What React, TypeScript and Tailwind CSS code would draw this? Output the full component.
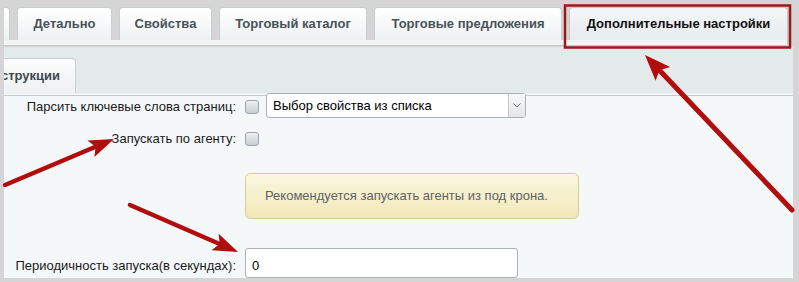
import React from "react";

function Arrow({ x1, y1, x2, y2, L = 24, W = 18, sw = 4.5 }: { x1: number; y1: number; x2: number; y2: number; L?: number; W?: number; sw?: number }) {
  const dx = x2 - x1;
  const dy = y2 - y1;
  const len = Math.hypot(dx, dy);
  const ux = dx / len;
  const uy = dy / len;
  const nx = -uy;
  const ny = ux;
  const bx = x2 - ux * L;
  const by = y2 - uy * L;
  const nbx = x2 - ux * (L - 5);
  const nby = y2 - uy * (L - 5);
  const pts = [
    [x2, y2],
    [bx + (nx * W) / 2, by + (ny * W) / 2],
    [nbx, nby],
    [bx - (nx * W) / 2, by - (ny * W) / 2],
  ]
    .map((p) => p.join(","))
    .join(" ");
  return (
    <g>
      <line x1={x1} y1={y1} x2={nbx} y2={nby} stroke="#b10d0d" strokeWidth={sw} strokeLinecap="round" />
      <polygon points={pts} fill="#b10d0d" />
    </g>
  );
}

function Tab({ label, w }: { label: string; w: number }) {
  return (
    <div
      className="h-[33px] shrink-0 flex items-center justify-center rounded-t-[4px] border border-b-0 border-[#c9cfd1] bg-gradient-to-b from-[#ffffff] to-[#eef1f2] text-[13px] font-bold text-[#48525a]"
      style={{ width: w }}
    >
      {label}
    </div>
  );
}

function Checkbox() {
  return <div className="w-[14px] h-[14px] rounded-[3px] border border-[#9ea6ab] bg-gradient-to-b from-[#eef0f2] to-[#c8ced2] shrink-0" />;
}

export default function App() {
  return (
    <div className="relative w-[799px] h-[282px] overflow-hidden bg-[#d5d5d5]" style={{ fontFamily: '"Liberation Sans", Arial, sans-serif' }}>
      {/* Tab bar */}
      <div className="h-[47px] flex flex-col">
        <div className="h-[7px]" />
        <div className="h-[33px] flex items-end pl-[4px] gap-[7px]">
          <div className="w-[6px] h-[33px] shrink-0 rounded-tr-[4px] border border-l-0 border-b-0 border-[#c9cfd1] bg-gradient-to-b from-[#ffffff] to-[#eef1f2]" />
          <Tab label="Детально" w={95} />
          <Tab label="Свойства" w={93} />
          <Tab label="Торговый каталог" w={148} />
          <Tab label="Торговые предложения" w={188} />
          <div className="w-[219px] h-[39px] -mb-[6px] shrink-0 flex items-start justify-center pt-[6px] rounded-t-[4px] border border-b-0 border-[#c4cacc] bg-gradient-to-b from-[#f4f6f6] to-[#e5eaeb] text-[13px] font-bold text-[#111]">
            Дополнительные настройки
          </div>
        </div>
        <div className="h-[6px] ml-[4px] mr-[12px] bg-[#f2f4f4] border-b border-[#c3c9cb]" />
      </div>
      {/* Sub tab area */}
      <div className="ml-[4px] mr-[6px] h-[46px] bg-[#e4e9ea] flex items-end">
        <div className="w-[72px] h-[35px] rounded-tr-[4px] border border-l-0 border-b-0 border-[#c9cfd1] bg-gradient-to-b from-[#fbfcfc] to-[#eef1f2] flex items-center text-[13px] font-bold text-[#3f484e] overflow-hidden">
          <span className="-ml-[3px]">струкции</span>
        </div>
      </div>
      <div className="ml-[4px] mr-[6px] h-[3px] bg-[#f3f5f5] border-b border-[#c5cbcd]" />
      {/* Content */}
      <div className="ml-[4px] mr-[6px] h-[182px] bg-[#f5f8f9] flex flex-col text-[13px] text-[#1a1a1a]">
        <div className="h-[22px] flex items-center">
          <div className="w-[233px] text-right pr-[1px]">Парсить ключевые слова страниц:</div>
          <div className="ml-[8px]"><Checkbox /></div>
          <div className="ml-[7px] w-[260px] h-[25px] -mt-[3px] rounded-[3px] border border-[#a9b1b5] bg-white flex items-center justify-between">
            <span className="pl-[6px] text-black">Выбор свойства из списка</span>
            <div className="w-[17px] h-full border-l border-[#c2c8cb] bg-gradient-to-b from-[#f7f7f7] to-[#e3e6e7] flex items-center justify-center">
              <svg width="8" height="5" viewBox="0 0 8 5"><path d="M0.5 0.5 L4 4 L7.5 0.5" stroke="#6d7579" strokeWidth="1" fill="none" /></svg>
            </div>
          </div>
        </div>
        <div className="h-[22px] mt-[11px] flex items-center">
          <div className="w-[233px] text-right pr-[1px]">Запускать по агенту:</div>
          <div className="ml-[8px]"><Checkbox /></div>
        </div>
        <div className="mt-[24px] ml-[241px] w-[334px] h-[49px] rounded-[5px] border border-[#d8cd97] bg-gradient-to-b from-[#fbf7e0] to-[#f1e8b8] flex items-center pl-[19px] text-[#5e6266]">
          Рекомендуется запускать агенты из под крона.
        </div>
        <div className="h-[30px] mt-[29px] flex items-start">
          <div className="w-[233px] text-right pr-[1px] mt-[8px]">Периодичность запуска(в секундах):</div>
          <div className="ml-[8px] w-[273px] h-[30px] rounded-[3px] border border-[#a9b1b5] bg-white pl-[6px] pt-[7px] text-black">0</div>
        </div>
      </div>
      {/* Arrows overlay */}
      <svg className="absolute left-0 top-0 pointer-events-none" width="799" height="282" viewBox="0 0 799 282">
        <rect x="565" y="5.5" width="225" height="42" fill="none" stroke="#9b1a1a" strokeWidth="2.5" />
        <Arrow x1={792} y1={210} x2={645} y2={55} L={26} W={20} sw={5} />
        <Arrow x1={5} y1={185} x2={114} y2={139} L={25} W={18} sw={4.5} />
        <Arrow x1={130} y1={205} x2={238} y2={252} L={25} W={18} sw={4.5} />
      </svg>
    </div>
  );
}
